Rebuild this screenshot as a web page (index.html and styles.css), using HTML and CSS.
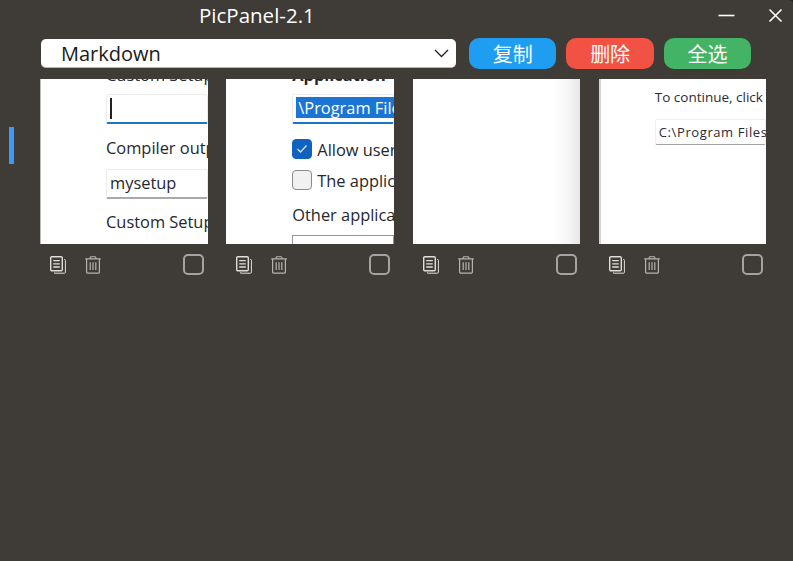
FILE: index.html
```html
<!DOCTYPE html>
<html>
<head>
    <title>PicPanel-2.1</title>
    <link rel="stylesheet" href="styles.css">
</head>
<body>
    <svg class="icon-defs" width="0" height="0">
        <symbol id="icon-copy" viewBox="0 0 16 18">
            <rect x="0.7" y="0.7" width="11.6" height="14.1" rx="1.2" fill="none" stroke="currentColor" stroke-width="1.4"/>
            <path d="M14 3.5 H14.6 A0.8 0.8 0 0 1 15.4 4.3 V16.3 A0.9 0.9 0 0 1 14.5 17.2 H4.5 V16.4" fill="none" stroke="currentColor" stroke-width="1"/>
            <path d="M3.2 4.6 H9.8 M3.2 7.8 H9.8 M3.2 11 H9.8" stroke="currentColor" stroke-width="1.3"/>
        </symbol>
        <symbol id="icon-trash" viewBox="0 0 16 18">
            <path d="M0.2 2.9 H15.8 M5.2 2.6 V1.6 A0.8 0.8 0 0 1 6 0.8 H10 A0.8 0.8 0 0 1 10.8 1.6 V2.6" fill="none" stroke="currentColor" stroke-width="1.1"/>
            <path d="M1.6 3 V16 A1.2 1.2 0 0 0 2.8 17.2 H13.2 A1.2 1.2 0 0 0 14.4 16 V3" fill="none" stroke="currentColor" stroke-width="1.2"/>
            <path d="M5.2 6.2 V14 M8 6.2 V14 M10.8 6.2 V14" stroke="currentColor" stroke-width="1.2"/>
        </symbol>
    </svg>

    <div class="window">
        <div class="title-bar">
            <span class="title">PicPanel-2.1</span>
            <div class="window-controls">
                <svg class="win-icon" width="17" height="17" viewBox="0 0 17 17"><path d="M0.5 8.5 H16.5" stroke="#fff" stroke-width="1.6"/></svg>
                <svg class="win-icon" width="15" height="15" viewBox="0 0 15 15"><path d="M1.5 1.5 L13.5 13.5 M13.5 1.5 L1.5 13.5" stroke="#fff" stroke-width="1.6"/></svg>
            </div>
        </div>

        <div class="toolbar">
            <div class="format-select">
                <span>Markdown</span>
                <svg width="15" height="9" viewBox="0 0 15 9"><path d="M1 1 L7.5 7.5 L14 1" fill="none" stroke="#222" stroke-width="1.3"/></svg>
            </div>
            <button class="action-button blue">复制</button>
            <button class="action-button red">删除</button>
            <button class="action-button green">全选</button>
        </div>

        <div class="content">
            <div class="side-rail"><div class="side-marker"></div></div>
            <div class="cards">
                <div class="card">
                    <div class="shot shot-one">
                        <div class="shot-clip">Custom Setup</div>
                        <div class="shot-input focused"><span class="caret"></span></div>
                        <div class="shot-label">Compiler output</div>
                        <div class="shot-input">mysetup</div>
                        <div class="shot-label last">Custom Setup</div>
                        <div class="shot-input"></div>
                    </div>
                    <div class="card-tools">
                        <svg class="tool"><use href="#icon-copy"/></svg>
                        <svg class="tool trash"><use href="#icon-trash"/></svg>
                        <span class="pick"></span>
                    </div>
                </div>

                <div class="card">
                    <div class="shot shot-two">
                        <div class="shot-clip strong">Application</div>
                        <div class="shot-input focused"><span class="selected">\Program Files\My</span></div>
                        <div class="shot-check first"><span class="box on"><svg width="12" height="10" viewBox="0 0 12 10"><path d="M1.5 5 L4.5 8 L10.5 1.5" fill="none" stroke="#d6e6f7" stroke-width="1.3"/></svg></span>Allow users to change</div>
                        <div class="shot-check"><span class="box"></span>The application</div>
                        <div class="shot-label other">Other application</div>
                        <div class="shot-input outlined"></div>
                    </div>
                    <div class="card-tools">
                        <svg class="tool"><use href="#icon-copy"/></svg>
                        <svg class="tool trash"><use href="#icon-trash"/></svg>
                        <span class="pick"></span>
                    </div>
                </div>

                <div class="card">
                    <div class="shot shot-three"></div>
                    <div class="card-tools">
                        <svg class="tool"><use href="#icon-copy"/></svg>
                        <svg class="tool trash"><use href="#icon-trash"/></svg>
                        <span class="pick"></span>
                    </div>
                </div>

                <div class="card">
                    <div class="shot shot-four">
                        <div class="small-text">To continue, click Next</div>
                        <div class="small-input">C:\Program Files\My</div>
                    </div>
                    <div class="card-tools">
                        <svg class="tool"><use href="#icon-copy"/></svg>
                        <svg class="tool trash"><use href="#icon-trash"/></svg>
                        <span class="pick"></span>
                    </div>
                </div>
            </div>
        </div>
    </div>
</body>
</html>
```

FILE: styles.css
```css
html {
    background-color: #24211f;
}

body {
    margin: 0;
    height: 561px;
    overflow: hidden;
    background-color: #3f3b37;
    border-top-right-radius: 4px;
    color: white;
    font-family: "Open Sans", "Noto Sans CJK SC", sans-serif;
}

.icon-defs {
    display: block;
    height: 0;
}

.window {
    display: flex;
    flex-direction: column;
}

.title-bar {
    display: flex;
    align-items: center;
    justify-content: space-between;
    height: 30px;
    padding-left: 199px;
    padding-right: 10px;
}

.title {
    font-size: 20.5px;
    line-height: 30px;
    white-space: nowrap;
}

.window-controls {
    display: flex;
    align-items: center;
    gap: 33px;
}

.toolbar {
    display: flex;
    align-items: center;
    height: 31px;
    margin-top: 8px;
    padding-left: 41px;
}

.format-select {
    display: flex;
    align-items: center;
    justify-content: space-between;
    box-sizing: border-box;
    width: 415px;
    height: 29px;
    margin-right: 13px;
    padding: 0 7px 0 20px;
    background-color: white;
    border-radius: 5px;
    border-bottom: 1px solid #b5b5b5;
    color: #1a1a1a;
    font-size: 20px;
}

.action-button {
    width: 87.3px;
    height: 31px;
    margin-right: 10.2px;
    padding: 0;
    border: none;
    border-radius: 10px;
    color: white;
    font-family: "Noto Sans CJK SC", sans-serif;
    font-size: 20px;
    line-height: 31px;
}

.blue {
    background-color: #1e9df1;
}

.red {
    background-color: #f25244;
}

.green {
    background-color: #43b465;
}

.content {
    display: flex;
    margin-top: 10px;
}

.side-rail {
    box-sizing: border-box;
    width: 40px;
    padding-left: 9px;
    padding-top: 48px;
}

.side-marker {
    width: 5px;
    height: 37px;
    background-color: #3d99f5;
}

.cards {
    display: grid;
    grid-template-columns: repeat(4, minmax(0, 1fr));
    column-gap: 18.65px;
    width: 726.45px;
}

.shot {
    height: 165px;
    overflow: hidden;
    box-sizing: border-box;
    padding-left: 66px;
    background-color: white;
    color: #24282e;
    font-family: "Open Sans", sans-serif;
    font-size: 16.4px;
    white-space: nowrap;
}

.shot-one {
    border-left: 1px solid #bbb;
    padding-left: 65px;
}

.shot-clip {
    height: 15px;
    margin-top: -14px;
    line-height: 20px;
    padding-bottom: 14px;
    box-sizing: content-box;
}

.shot-clip.strong {
    font-weight: 700;
}

.shot-input {
    box-sizing: border-box;
    height: 30px;
    margin-top: 0;
    padding-left: 3px;
    background-color: white;
    border: 1px solid #ececec;
    border-bottom: 2px solid #a9a9a9;
    border-radius: 2px;
    line-height: 26px;
}

.shot-input.focused {
    border-bottom-color: #1b75c9;
    height: 30px;
}

.caret {
    display: inline-block;
    width: 1.5px;
    height: 21px;
    margin-top: 3px;
    background-color: #222;
    vertical-align: top;
}

.selected {
    display: inline-block;
    height: 21px;
    margin-top: 2px;
    padding-left: 2px;
    background-color: #1b75d4;
    color: white;
    line-height: 21px;
    vertical-align: top;
}

.shot-label {
    height: 45px;
    line-height: 48px;
}

.shot-label.last {
    line-height: 45px;
}

.shot-check {
    display: flex;
    align-items: center;
    gap: 5px;
    height: 20px;
    margin-top: 11px;
}

.shot-check.first {
    margin-top: 15px;
}

.box {
    display: flex;
    flex: none;
    align-items: center;
    justify-content: center;
    box-sizing: border-box;
    width: 20px;
    height: 20px;
    background-color: #f1f1f1;
    border: 1px solid #8a8a8a;
    border-radius: 4px;
}

.box.on {
    background-color: #0f62be;
    border-color: #0f62be;
}

.shot-label.other {
    height: 45px;
    line-height: 50px;
}

.shot-input.outlined {
    border: 1px solid #8f97a3;
    border-radius: 0;
}

.shot-three {
    background: linear-gradient(to right, white 84%, #f6f6f6 93%, #e6e6e6 100%);
}

.shot-four {
    padding-left: 54px;
    border-left: 2px solid #d4d4d4;
    font-size: 13.5px;
    color: #2a2c33;
}

.small-text {
    height: 40px;
    padding-top: 9px;
    box-sizing: border-box;
    line-height: 18px;
}

.small-input {
    box-sizing: border-box;
    height: 26px;
    padding-left: 3px;
    background-color: white;
    border: 1px solid #eee;
    border-bottom: 1px solid #a5a5a5;
    border-radius: 2px;
    line-height: 24px;
    font-size: 13px;
    letter-spacing: 0.6px;
}

.card-tools {
    display: flex;
    align-items: center;
    height: 41px;
    padding-left: 10px;
    color: #e0dedb;
}

.tool {
    width: 16px;
    height: 18px;
    margin-right: 19px;
}

.tool.trash {
    color: #b5b3b0;
    margin-right: 0;
}

.pick {
    box-sizing: border-box;
    width: 21px;
    height: 21px;
    margin-left: auto;
    margin-right: 3.5px;
    border: 2px solid #a5a3a0;
    border-radius: 5px;
}
```
